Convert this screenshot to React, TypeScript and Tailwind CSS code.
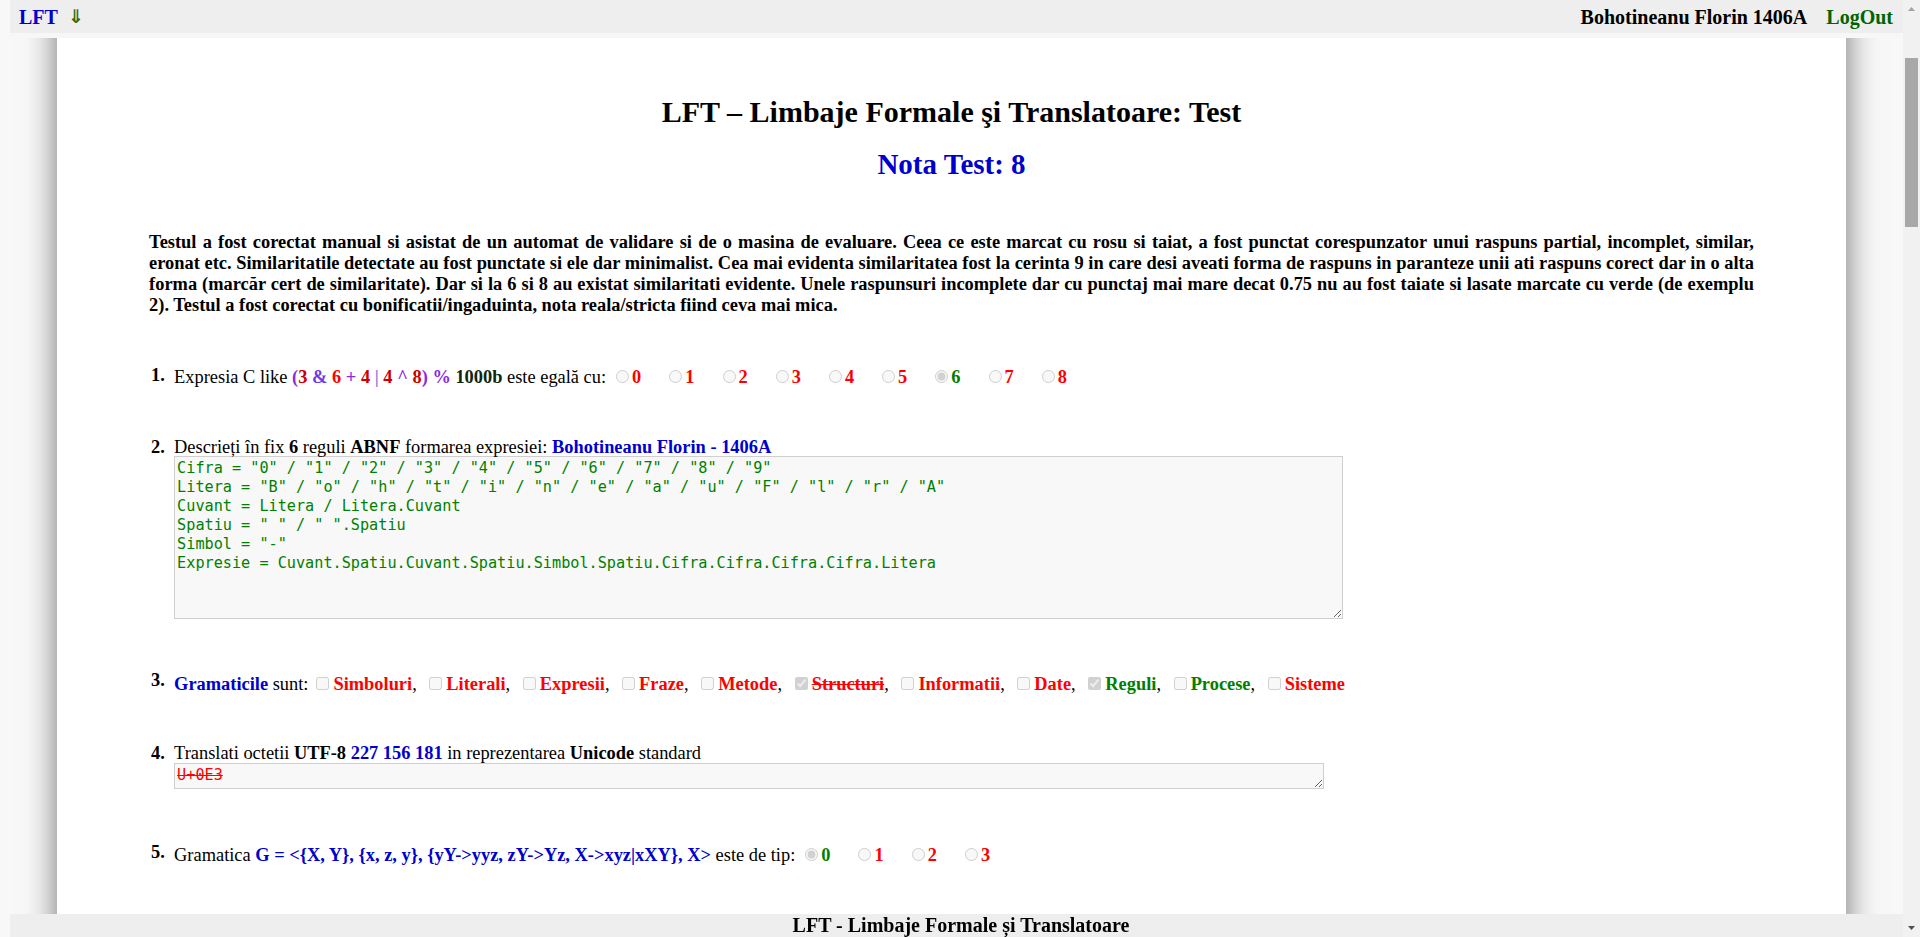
import React from "react";

type Opt = { label: string; color: string; checked?: boolean };

function RadioRow({ name, options }: { name: string; options: Opt[] }) {
  return (
    <>
      {options.map((o, i) => (
        <React.Fragment key={o.label}>
          <input
            type="radio"
            name={name}
            disabled
            defaultChecked={o.checked}
            className={`m-0 mr-[3px] align-baseline ${i === 0 ? "ml-[10px]" : "ml-[28px]"}`}
          />
          <b className={o.color}>{o.label}</b>
        </React.Fragment>
      ))}
    </>
  );
}

function Check({ label, color, checked, strike }: { label: string; color: string; checked?: boolean; strike?: boolean }) {
  return (
    <>
      <input type="checkbox" disabled defaultChecked={checked} className="m-0 ml-[8px] mr-[4px] align-baseline" />
      <b className={`${color} ${strike ? "line-through" : ""}`}>{label}</b>
    </>
  );
}

function Scrollbar() {
  // the page scrollbar on the right edge
  return (
    <div className="fixed top-0 right-0 bottom-0 z-20 flex w-[17px] flex-col items-center bg-[#f1f1f1]">
      <svg width="17" height="17" viewBox="0 0 17 17" className="shrink-0">
        <polygon points="5,11 12,11 8.5,7" fill="#a3a3a3" />
      </svg>
      <div className="mt-[41px] h-[169px] w-[13px] bg-[#a8a8a8]" />
      <div className="flex-1" />
      <svg width="17" height="17" viewBox="0 0 17 17" className="shrink-0">
        <polygon points="5,6 12,6 8.5,10" fill="#505050" />
      </svg>
    </div>
  );
}

const red = "text-[#ff0000]";
const green = "text-[#008000]";

export default function App() {
  const q1: Opt[] = ["0", "1", "2", "3", "4", "5", "6", "7", "8"].map((d) => ({
    label: d,
    color: d === "6" ? green : red,
    checked: d === "6",
  }));
  const q5: Opt[] = ["0", "1", "2", "3"].map((d) => ({
    label: d,
    color: d === "0" ? green : red,
    checked: d === "0",
  }));

  const abnf = [
    'Cifra = "0" / "1" / "2" / "3" / "4" / "5" / "6" / "7" / "8" / "9"',
    'Litera = "B" / "o" / "h" / "t" / "i" / "n" / "e" / "a" / "u" / "F" / "l" / "r" / "A"',
    "Cuvant = Litera / Litera.Cuvant",
    'Spatiu = " " / " ".Spatiu',
    'Simbol = "-"',
    "Expresie = Cuvant.Spatiu.Cuvant.Spatiu.Simbol.Spatiu.Cifra.Cifra.Cifra.Cifra.Litera",
  ].join("\n");

  return (
    <div className="mr-[17px] min-h-screen bg-[#f8f8f8] font-['Liberation_Serif','Times_New_Roman',serif] text-black">
      {/* top bar */}
      <header className="fixed top-0 left-[10px] right-[17px] z-10 flex h-[38px] items-center justify-between border-b-[5px] border-[#f7f7f7] bg-[#eeeeee] pl-[9px] pr-[10px] text-[20px] font-bold">
        <div className="flex items-center">
          <span className="text-[#0000cd]">LFT</span>
          <span className="ml-[10px] font-['DejaVu_Sans',sans-serif] text-[19px] leading-none text-[#2f6b12]">⇓</span>
        </div>
        <div className="flex items-center gap-[19px]">
          <span>Bohotineanu Florin 1406A</span>
          <span className="text-[#006400]">LogOut</span>
        </div>
      </header>

      <main className="mx-auto min-h-[4980px] w-[94%] bg-white px-[92px] pt-[95px] shadow-[0_0_30px_rgba(0,0,0,0.55)]">
        <h1 className="text-center text-[30px] font-bold leading-[33px]">LFT – Limbaje Formale şi Translatoare: Test</h1>
        <h2 className="mt-[20px] text-center text-[29px] font-bold leading-[33px] text-[#0000cd]">Nota Test: 8</h2>

        <p className="mt-[51px] text-justify text-[18.4px] font-bold leading-[21px]">
          <span className="block [text-align-last:justify]">
            Testul a fost corectat manual si asistat de un automat de validare si de o masina de evaluare. Ceea ce este
            marcat cu rosu si taiat, a fost punctat corespunzator unui raspuns partial, incomplet, similar,
          </span>
          <span className="block [text-align-last:justify]">
            eronat etc. Similaritatile detectate au fost punctate si ele dar minimalist. Cea mai evidenta similaritatea
            fost la cerinta 9 in care desi aveati forma de raspuns in paranteze unii ati raspuns corect dar in o alta
          </span>
          <span className="block [text-align-last:justify]">
            forma (marcăr cert de similaritate). Dar si la 6 si 8 au existat similaritati evidente. Unele raspunsuri
            incomplete dar cu punctaj mai mare decat 0.75 nu au fost taiate si lasate marcate cu verde (de exemplu
          </span>
          <span className="block">2). Testul a fost corectat cu bonificatii/ingaduinta, nota reala/stricta fiind ceva mai mica.</span>
        </p>

        <div className="text-[18.4px] leading-[21px]">
          {/* 1 */}
          <div className="mt-[49px] flex items-start">
            <b className="w-[25px] shrink-0 pl-[2px]">1.</b>
            <div className="mt-[2px] whitespace-nowrap">
              Expresia C like{" "}
              <b>
                <span className="text-[#8a2be2]">(</span>
                <span className="text-[#cc0000]">3</span> <span className="text-[#6a3de8]">&amp;</span>{" "}
                <span className="text-[#ff0000]">6</span> <span className="text-[#8a2be2]">+</span>{" "}
                <span className="text-[#cc0000]">4</span> <span className="text-[#9370db]">|</span>{" "}
                <span className="text-[#cc0000]">4</span> <span className="text-[#8a2be2]">^</span>{" "}
                <span className="text-[#cc0000]">8</span>
                <span className="text-[#8a2be2]">)</span> <span className="text-[#8a2be2]">%</span>{" "}
                <span className="text-[#0d260d]">1000b</span>
              </b>{" "}
              este egală cu:
              <RadioRow name="q1" options={q1} />
            </div>
          </div>

          {/* 2 */}
          <div className="mt-[49px] flex items-start">
            <b className="w-[25px] shrink-0 pl-[2px]">2.</b>
            <div>
              <div>
                Descrieți în fix <b>6</b> reguli <b>ABNF</b> formarea expresiei:{" "}
                <b className="text-[#0000cd]">Bohotineanu Florin - 1406A</b>
              </div>
              <textarea
                readOnly
                value={abnf}
                className="-mt-[2px] block h-[163px] w-[1169px] border border-[#cfcfcf] bg-[#f8f8f8] p-[2px] font-['DejaVu_Sans_Mono',monospace] text-[15.2px] leading-[19px] text-[#008000] outline-none"
              />
            </div>
          </div>

          {/* 3 */}
          <div className="mt-[51px] flex items-start">
            <b className="w-[25px] shrink-0 pl-[2px]">3.</b>
            <div className="mt-[4px] whitespace-nowrap">
              <b className="text-[#0000cd]">Gramaticile</b> sunt:
              <Check label="Simboluri" color={red} />, <Check label="Literali" color={red} />,{" "}
              <Check label="Expresii" color={red} />, <Check label="Fraze" color={red} />,{" "}
              <Check label="Metode" color={red} />, <Check label="Structuri" color={red} checked strike />,{" "}
              <Check label="Informatii" color={red} />, <Check label="Date" color={red} />,{" "}
              <Check label="Reguli" color={green} checked />, <Check label="Procese" color={green} />,{" "}
              <Check label="Sisteme" color={red} />
            </div>
          </div>

          {/* 4 */}
          <div className="mt-[48px] flex items-start">
            <b className="w-[25px] shrink-0 pl-[2px]">4.</b>
            <div>
              <div>
                Translati octetii <b>UTF-8</b> <b className="text-[#0000cd]">227 156 181</b> in reprezentarea{" "}
                <b>Unicode</b> standard
              </div>
              <textarea
                readOnly
                value="U+0E3"
                rows={1}
                className="-mt-[1px] block h-[26px] w-[1150px] border border-[#cfcfcf] bg-[#f8f8f8] p-[2px] font-['DejaVu_Sans_Mono',monospace] text-[15.2px] leading-[19px] text-[#ff0000] line-through outline-none"
              />
            </div>
          </div>

          {/* 5 */}
          <div className="mt-[53px] flex items-start">
            <b className="w-[25px] shrink-0 pl-[2px]">5.</b>
            <div className="mt-[3px] whitespace-nowrap">
              Gramatica{" "}
              <b className="text-[#0000cd]">G = &lt;{"{X, Y}, {x, z, y}, {yY->yyz, zY->Yz, X->xyz|xXY}, X"}&gt;</b> este
              de tip:
              <RadioRow name="q5" options={q5} />
            </div>
          </div>
        </div>
      </main>

      {/* bottom bar */}
      <footer className="fixed bottom-0 left-[10px] right-[17px] z-10 h-[23px] bg-[#eeeeee] pl-[9px] text-center text-[20px] font-bold leading-[23px]">
        LFT - Limbaje Formale și Translatoare
      </footer>

      <Scrollbar />
    </div>
  );
}
